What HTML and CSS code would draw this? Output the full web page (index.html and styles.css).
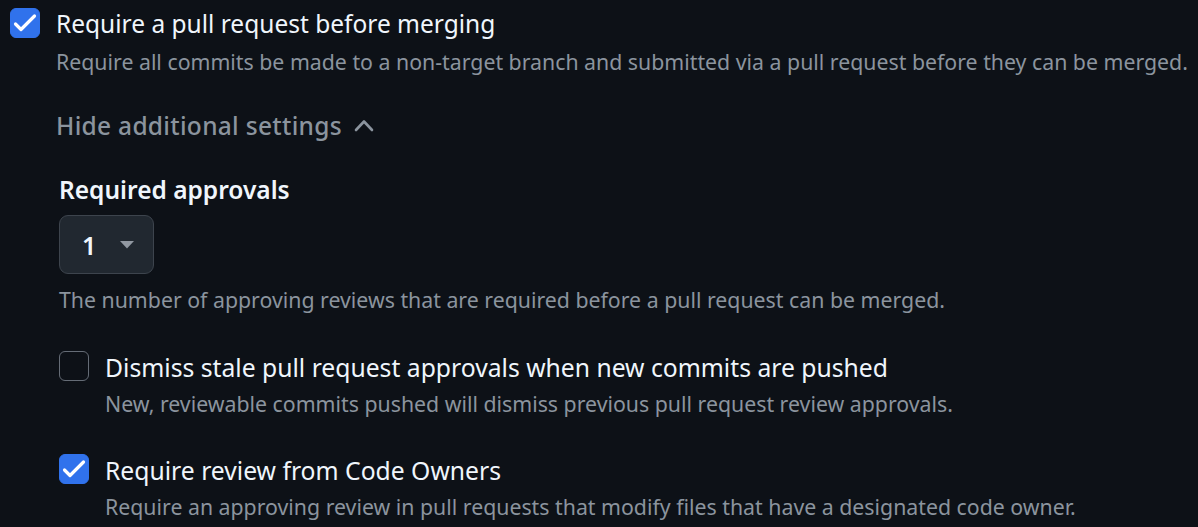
FILE: index.html
```html
<!DOCTYPE html>
<html lang="en">
<head>
<meta charset="utf-8">
<title>Branch protection</title>
<link rel="stylesheet" href="styles.css">
</head>
<body>
<div class="page">
  <div class="option">
    <span class="checkbox checked">
      <svg viewBox="0 0 30 30" width="30" height="30"><path d="M5.5 16 L11 21.5 L24.5 8" fill="none" stroke="#fff" stroke-width="3.2" stroke-linecap="round" stroke-linejoin="round"/></svg>
    </span>
    <div class="option-body">
      <div class="option-title">Require a pull request before merging</div>
      <div class="option-desc">Require all commits be made to a non-target branch and submitted via a pull request before they can be merged.</div>

      <button class="toggle">Hide additional settings
        <svg class="chev" viewBox="0 0 20 14" width="20" height="14"><path d="M2 12 L10 3.5 L18 12" fill="none" stroke="currentColor" stroke-width="2.6" stroke-linecap="round" stroke-linejoin="round"/></svg>
      </button>

      <div class="nested">
        <div class="field-label">Required approvals</div>
        <div class="select">
          <span class="select-value">1</span>
          <svg class="caret" viewBox="0 0 14 8" width="14" height="8"><path d="M0 0 L14 0 L7 7.5 Z" fill="currentColor"/></svg>
        </div>
        <div class="field-note">The number of approving reviews that are required before a pull request can be merged.</div>

        <div class="option sub">
          <span class="checkbox"></span>
          <div class="option-body">
            <div class="option-title">Dismiss stale pull request approvals when new commits are pushed</div>
            <div class="option-desc">New, reviewable commits pushed will dismiss previous pull request review approvals.</div>
          </div>
        </div>

        <div class="option sub">
          <span class="checkbox checked">
            <svg viewBox="0 0 30 30" width="30" height="30"><path d="M5.5 16 L11 21.5 L24.5 8" fill="none" stroke="#fff" stroke-width="3.2" stroke-linecap="round" stroke-linejoin="round"/></svg>
          </span>
          <div class="option-body">
            <div class="option-title">Require review from Code Owners</div>
            <div class="option-desc">Require an approving review in pull requests that modify files that have a designated code owner.</div>
          </div>
        </div>
      </div>
    </div>
  </div>
</div>
</body>
</html>
```
FILE: styles.css
```css
html, body {
  margin: 0;
  padding: 0;
  background: #0d1117;
}
body {
  font-family: "Noto Sans", "Open Sans", sans-serif;
  color: #f0f6fc;
  overflow: hidden;
}
.page {
  padding: 8px 0 0 10px;
}
.option {
  display: flex;
  align-items: flex-start;
  gap: 16px;
}
.checkbox {
  flex: 0 0 auto;
  width: 30px;
  height: 30px;
  box-sizing: border-box;
  border-radius: 6px;
  border: 1.5px solid #656c76;
  background: transparent;
  display: block;
}
.checkbox.checked {
  background: #3072ec;
  border-color: #3072ec;
}
.checkbox svg {
  display: block;
  margin: -1.5px;
}
.option-body {
  display: flex;
  flex-direction: column;
  align-items: flex-start;
}
.option-title {
  font-size: 24.5px;
  line-height: 32px;
  color: #f0f6fc;
  white-space: nowrap;
}
.option-desc {
  margin-top: 7px;
  font-size: 21.3px;
  line-height: 30px;
  color: #8b949e;
  white-space: nowrap;
}
.sub .option-title {
  font-size: 24.7px;
  line-height: 34px;
}
.sub .option-desc {
  margin-top: 4px;
}
.toggle {
  margin-top: 34px;
  padding: 0;
  border: 0;
  background: none;
  font-family: inherit;
  font-size: 24.5px;
  font-weight: 500;
  letter-spacing: 0.3px;
  line-height: 30px;
  color: #8b949e;
  display: flex;
  align-items: center;
  gap: 12px;
  cursor: pointer;
}
.chev {
  display: block;
  margin-top: -3px;
}
.nested {
  margin-top: 34px;
  padding-left: 3px;
  display: flex;
  flex-direction: column;
  align-items: flex-start;
}
.field-label {
  font-size: 24.5px;
  font-weight: 600;
  line-height: 30px;
  color: #f0f6fc;
}
.select {
  margin-top: 10px;
  width: 95px;
  height: 59px;
  box-sizing: border-box;
  border: 1px solid #3d444d;
  border-radius: 9px;
  background: #212830;
  display: flex;
  align-items: center;
  padding-left: 22px;
  gap: 24px;
}
.select-value {
  font-size: 25px;
  font-weight: 600;
  color: #f0f6fc;
  line-height: 30px;
}
.caret {
  display: block;
  color: #9198a1;
}
.field-note {
  margin-top: 11px;
  font-size: 21.3px;
  line-height: 30px;
  color: #8b949e;
  white-space: nowrap;
}
.option.sub {
  margin-top: 36px;
}
.option.sub + .option.sub {
  margin-top: 35px;
}
```
